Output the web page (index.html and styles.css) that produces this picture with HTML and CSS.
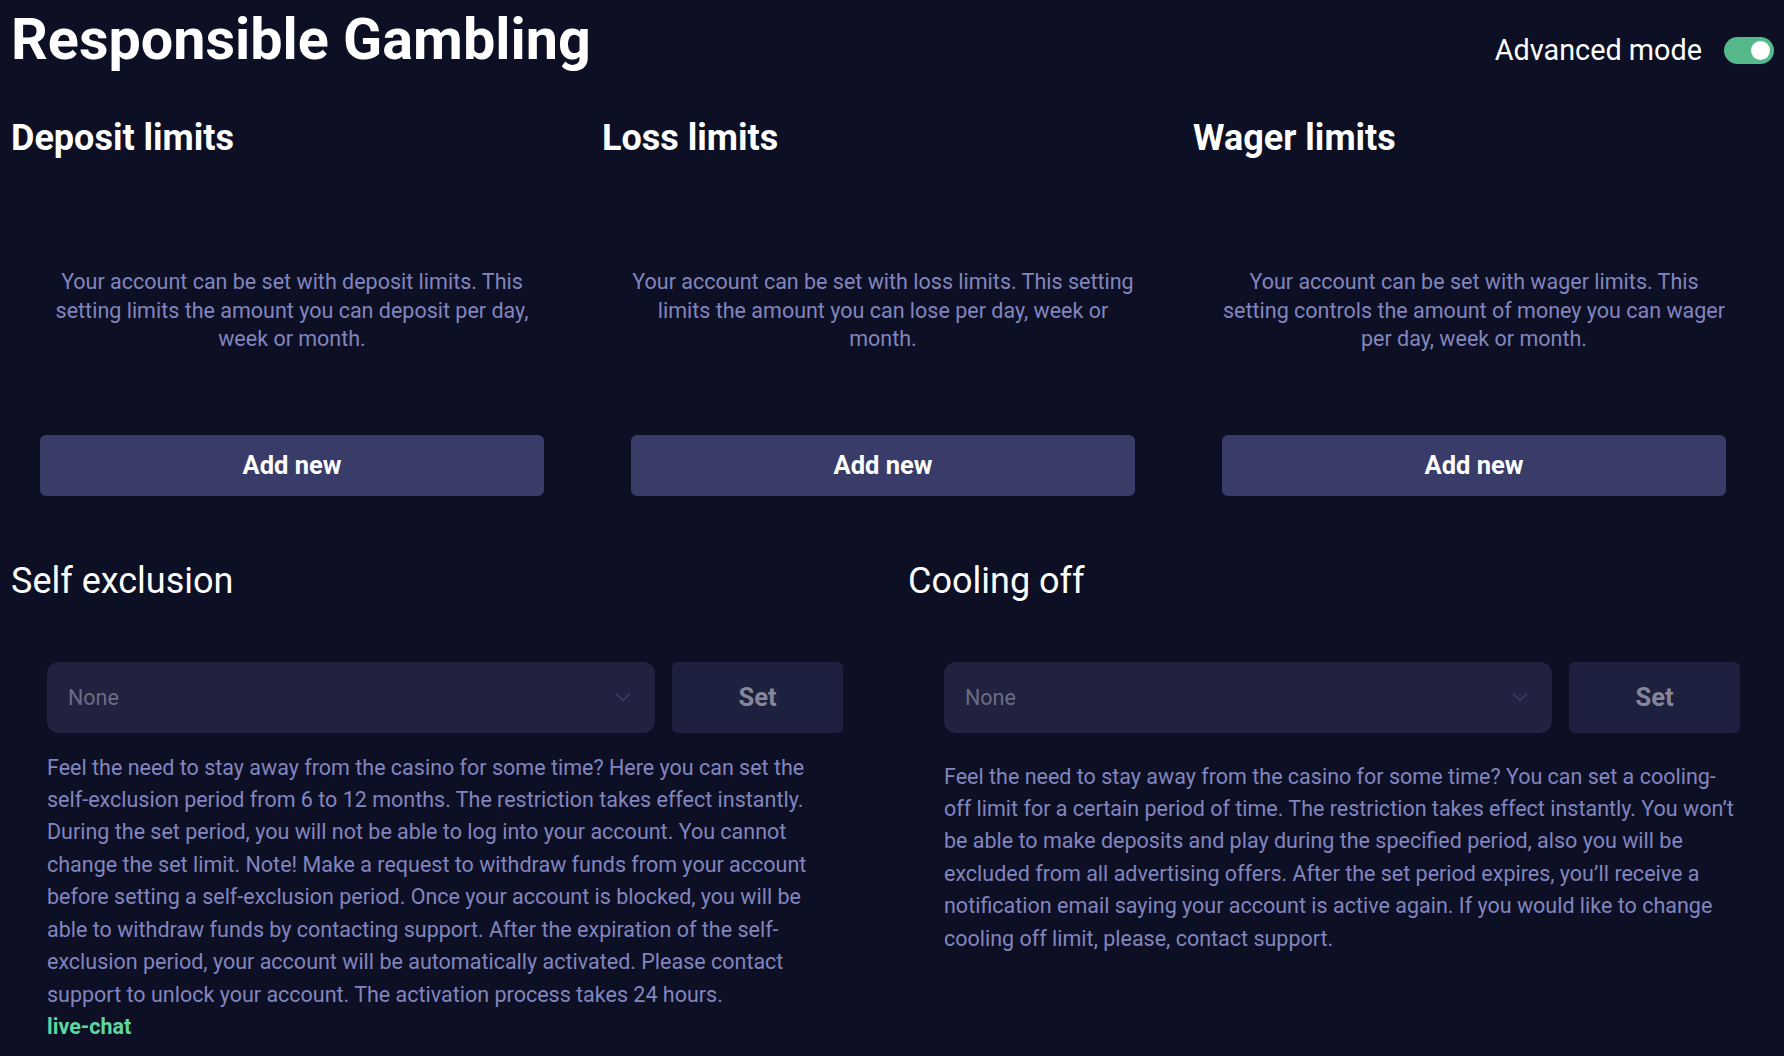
FILE: index.html
```html
<!DOCTYPE html>
<html lang="en">
<head>
    <meta charset="UTF-8">
    <meta name="viewport" content="width=device-width, initial-scale=1.0">
    <title>Responsible Gambling</title>
    <link rel="stylesheet" href="styles.css">
</head>
<body>
    <header class="page-head">
        <h1>Responsible Gambling</h1>
        <div class="mode">
            <span>Advanced mode</span>
            <button class="toggle" aria-label="Advanced mode"><span class="knob"></span></button>
        </div>
    </header>

    <!-- LIMITS -->
    <div class="limits">
        <section class="limit">
            <h2>Deposit limits</h2>
            <p class="desc">Your account can be set with deposit limits. This setting limits the amount you can deposit per day, week or month.</p>
            <button class="add-btn">Add new</button>
        </section>
        <section class="limit">
            <h2>Loss limits</h2>
            <p class="desc">Your account can be set with loss limits. This setting limits the amount you can lose per day, week or month.</p>
            <button class="add-btn">Add new</button>
        </section>
        <section class="limit">
            <h2>Wager limits</h2>
            <p class="desc">Your account can be set with wager limits. This setting controls the amount of money you can wager per day, week or month.</p>
            <button class="add-btn">Add new</button>
        </section>
    </div>

    <!-- EXCLUSION -->
    <div class="blocks">
        <section class="block">
            <h3>Self exclusion</h3>
            <div class="block-body">
                <div class="picker">
                    <div class="select">
                        <span>None</span>
                        <svg width="16" height="10" viewBox="0 0 16 10"><path d="M1 1.5l7 7 7-7" fill="none" stroke="#3d3f6c" stroke-width="1.5"/></svg>
                    </div>
                    <button class="set-btn">Set</button>
                </div>
                <p class="note">Feel the need to stay away from the casino for some time? Here you can set the self-exclusion period from 6 to 12 months. The restriction takes effect instantly. During the set period, you will not be able to log into your account. You cannot change the set limit. Note! Make a request to withdraw funds from your account before setting a self-exclusion period. Once your account is blocked, you will be able to withdraw funds by contacting support. After the expiration of the self-exclusion period, your account will be automatically activated. Please contact support to unlock your account. The activation process takes 24 hours.<br><a href="#" class="chat">live-chat</a></p>
            </div>
        </section>
        <section class="block">
            <h3>Cooling off</h3>
            <div class="block-body">
                <div class="picker">
                    <div class="select">
                        <span>None</span>
                        <svg width="16" height="10" viewBox="0 0 16 10"><path d="M1 1.5l7 7 7-7" fill="none" stroke="#3d3f6c" stroke-width="1.5"/></svg>
                    </div>
                    <button class="set-btn">Set</button>
                </div>
                <p class="note note-low">Feel the need to stay away from the casino for some time? You can set a cooling-off limit for a certain period of time. The restriction takes effect instantly. You won’t be able to make deposits and play during the specified period, also you will be excluded from all advertising offers. After the set period expires, you’ll receive a notification email saying your account is active again. If you would like to change cooling off limit, please, contact support.</p>
            </div>
        </section>
    </div>
</body>
</html>
```

FILE: styles.css
```css
*{
    margin:0;
    box-sizing: border-box;
}
body{
    margin: 0;
    padding: 0;
    background-color: #0d1024;
    color: white;
    font-family: Roboto, "Liberation Sans", Arial, sans-serif;
    height: 100vh;
    overflow: hidden;
}
button{
    font-family: inherit;
    border: none;
    cursor: pointer;
}
/* HEADER */
.page-head{
    display: flex;
    justify-content: space-between;
    align-items: flex-start;
    padding: 5px 10px 0 11px;
}
.page-head > h1{
    font-size: 57.5px;
    font-weight: 700;
    line-height: 69px;
}
.mode{
    display: flex;
    align-items: center;
    gap: 22px;
    padding-top: 28px;
}
.mode > span{
    font-size: 28.8px;
    line-height: 34px;
}
.toggle{
    position: relative;
    width: 50px;
    height: 27px;
    border-radius: 14px;
    background-color: #56b98b;
}
.knob{
    position: absolute;
    top: 4px;
    right: 4px;
    width: 19px;
    height: 19px;
    border-radius: 50%;
    background-color: white;
}
/* LIMITS */
.limits{
    display: grid;
    grid-template-columns: repeat(3, 1fr);
    gap: 29px;
    padding: 0 29px 0 11px;
    margin-top: 42px;
}
.limit{
    display: flex;
    flex-direction: column;
}
.limit > h2{
    font-size: 36px;
    font-weight: 700;
    line-height: 44px;
}
.desc{
    margin: 108px 29px 0 29px;
    text-align: center;
    color: #8285bf;
    font-size: 21.5px;
    line-height: 28.5px;
}
.add-btn{
    margin: 81px 29px 0 29px;
    height: 61px;
    border-radius: 6px;
    background-color: #393b69;
    color: white;
    font-size: 25.5px;
    font-weight: 700;
}
/* SELF EXCLUSION / COOLING OFF */
.blocks{
    display: grid;
    grid-template-columns: 1fr 1fr;
    gap: 29px;
    padding: 0 8px 0 11px;
    margin-top: 64px;
}
.block > h3{
    font-size: 36px;
    font-weight: 400;
    line-height: 42px;
}
.block-body{
    padding: 60px 36px 0 36px;
}
.picker{
    display: flex;
    gap: 17px;
    height: 71px;
}
.select{
    flex: 1;
    display: flex;
    align-items: center;
    justify-content: space-between;
    padding: 0 24px 0 21px;
    border-radius: 12px;
    background-color: #20223f;
    color: #6c6d84;
    font-size: 21.5px;
}
.set-btn{
    width: 171px;
    border-radius: 6px;
    background-color: #1e2040;
    color: #86879b;
    font-size: 25.5px;
    font-weight: 700;
}
.note{
    margin-top: 19px;
    color: #8285bf;
    font-size: 21.5px;
    line-height: 32.45px;
}
.note-low{
    margin-top: 28px;
}
.chat{
    color: #5fd6a0;
    font-weight: 700;
    text-decoration: none;
}
```
